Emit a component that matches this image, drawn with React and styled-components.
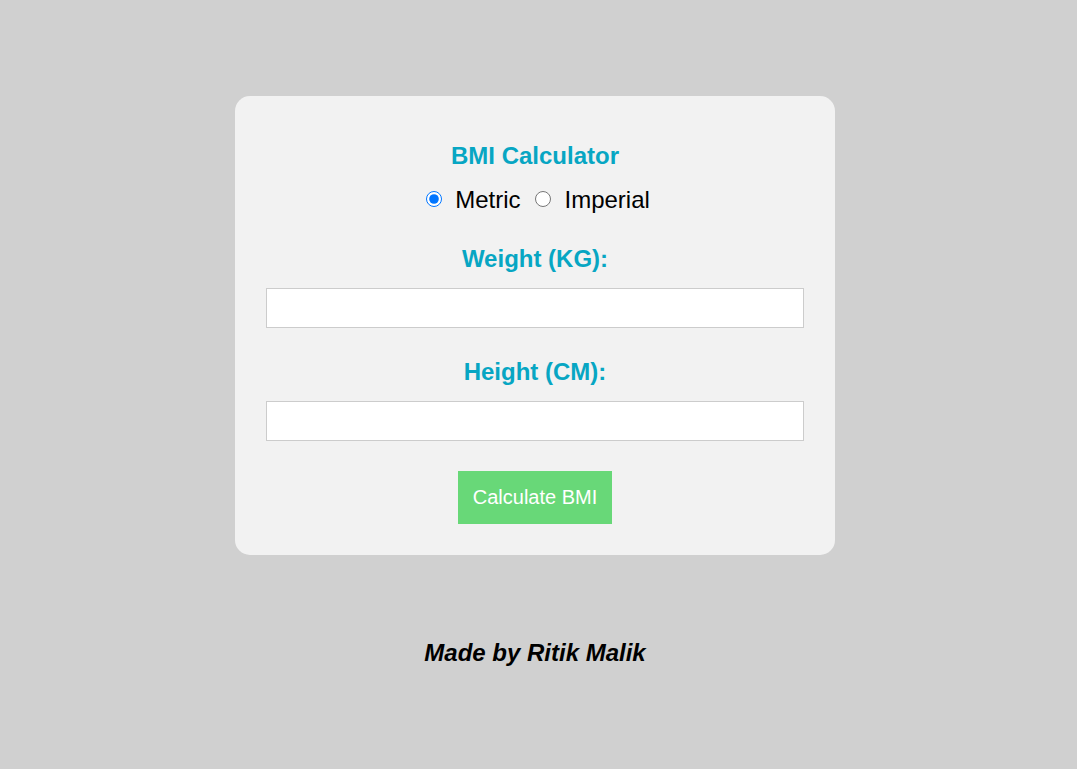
import React, { useState } from 'react'
import styled, { createGlobalStyle } from 'styled-components'

const GlobalStyle = createGlobalStyle`
  html, body {
    margin: 0;
    padding: 0;
    background: #d0d0d0;
    font-family: "Liberation Sans", Arial, sans-serif;
  }
`

const Page = styled.div`
  min-height: 769px;
  display: flex;
  flex-direction: column;
  align-items: center;
  padding: 96px 7px 0 0;
  box-sizing: border-box;
`

const Card = styled.div`
  width: 600px;
  box-sizing: border-box;
  background: #f2f2f2;
  border-radius: 15px;
  padding: 46px 31px 31px;
  display: flex;
  flex-direction: column;
  align-items: center;
`

const Title = styled.h2`
  margin: 0;
  font-size: 24px;
  line-height: 28px;
  font-weight: bold;
  color: #07a6c3;
`

const UnitRow = styled.div`
  margin-top: 16px;
  margin-left: 6px;
  display: flex;
  align-items: center;
  font-size: 24px;
  line-height: 28px;
  color: #000;
`

const UnitOption = styled.label`
  display: flex;
  align-items: center;
  gap: 13px;
  margin-right: ${p => (p.last ? '0' : '15px')};
  cursor: pointer;
`

const Radio = styled.input`
  width: 16px;
  height: 16px;
  margin: 0;
  position: relative;
  top: -1px;
  accent-color: #0075ff;
`

const FieldLabel = styled.label`
  margin-top: ${p => p.gap}px;
  font-size: 24px;
  line-height: 28px;
  font-weight: bold;
  color: #07a6c3;
`

const Input = styled.input`
  margin-top: 15px;
  width: 100%;
  height: 40px;
  box-sizing: border-box;
  border: 1px solid #cccccc;
  background: #fff;
  font-size: 18px;
  padding: 0 10px;
  outline: none;
`

const Button = styled.button`
  margin-top: 30px;
  width: 154px;
  height: 53px;
  border: none;
  background: #68d878;
  color: #fff;
  font-family: "Liberation Sans", Arial, sans-serif;
  font-size: 20px;
  cursor: pointer;
`

const Footer = styled.p`
  margin: 84px 0 0;
  font-size: 24px;
  line-height: 28px;
  font-weight: bold;
  font-style: italic;
  color: #000;
`

export default function App() {
  const [unit, setUnit] = useState('metric')
  const metric = unit === 'metric'

  return (
    <>
      <GlobalStyle />
      <Page>
        <Card>
          <Title>BMI Calculator</Title>
          <UnitRow>
            <UnitOption>
              <Radio type="radio" name="unit" checked={metric} onChange={() => setUnit('metric')} />
              Metric
            </UnitOption>
            <UnitOption last>
              <Radio type="radio" name="unit" checked={!metric} onChange={() => setUnit('imperial')} />
              Imperial
            </UnitOption>
          </UnitRow>
          <FieldLabel gap={31}>{metric ? 'Weight (KG):' : 'Weight (LBS):'}</FieldLabel>
          <Input type="number" />
          <FieldLabel gap={30}>{metric ? 'Height (CM):' : 'Height (IN):'}</FieldLabel>
          <Input type="number" />
          <Button>Calculate BMI</Button>
        </Card>
        <Footer>Made by Ritik Malik</Footer>
      </Page>
    </>
  )
}
